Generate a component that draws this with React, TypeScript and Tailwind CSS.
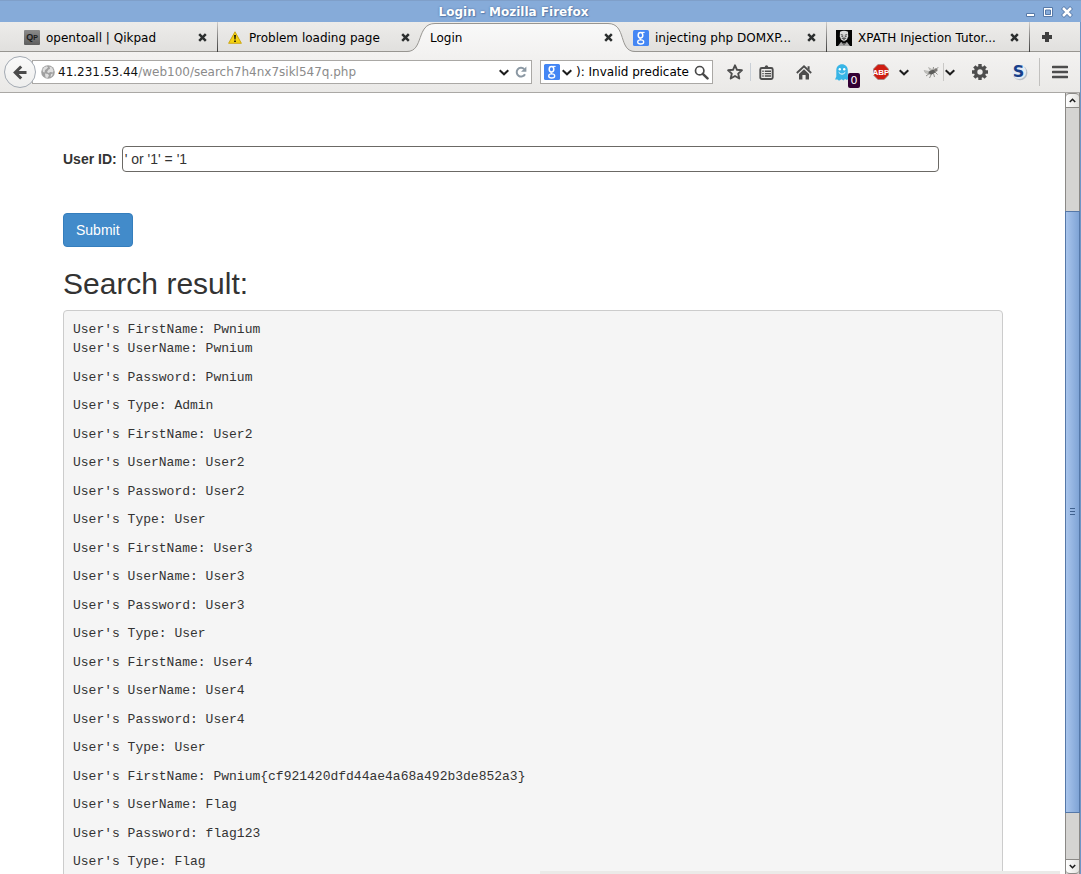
import React from "react";

type IconProps = { className?: string };

function CloseMark() {
  return (
    <svg viewBox="0 0 9 9" className="h-[9px] w-[9px]" aria-hidden="true">
      <path d="M1.200 1.200 7.800 7.800M7.800 1.200 1.200 7.800" stroke="#2b2e2e" strokeWidth="2.500" />
    </svg>
  );
}

function Chevron({ className = "" }: IconProps) {
  return (
    <svg viewBox="0 0 10 7" className={`h-[7px] w-[10px] shrink-0 ${className}`} aria-hidden="true">
      <path d="M.7 1.200 5 5.300 9.300 1.200" fill="none" stroke="#1d1d1d" strokeWidth="2" />
    </svg>
  );
}

function QikpadIcon() {
  return (
    <span className="flex h-[15px] w-4 items-center justify-center rounded-[1px] bg-linear-to-b from-[#8b8b8b] to-[#5e5e5e] font-['Liberation_Sans',sans-serif] text-[9px] leading-none font-bold text-[#1c1c1c]">
      Q<span className="text-[7px]">P</span>
    </span>
  );
}

function WarningIcon() {
  return (
    <svg viewBox="0 0 14 13" className="h-[13px] w-[14px]" aria-hidden="true">
      <path d="M7 .8 13.4 12.3H.6Z" fill="#f5d312" stroke="#c9a20a" strokeWidth=".9" strokeLinejoin="round" />
      <path d="M6 4h2l-.4 4.600h-1.200ZM6.100 9.500h1.800v1.600H6.100Z" fill="#2a2300" />
    </svg>
  );
}

function GoogleIcon() {
  return (
    <svg viewBox="0 0 16 16" className="h-4 w-4 shrink-0" aria-hidden="true">
      <rect width="16" height="16" rx="1.500" fill="#4486f4" />
      <g fill="none" stroke="#fff">
        <ellipse cx="7.500" cy="5.300" rx="2.300" ry="2.700" strokeWidth="1.500" />
        <path d="M8.500 2.400H11.600" strokeWidth="1.100" />
        <path d="M7.200 8.200Q6.600 9 8 9.600" strokeWidth="1.200" />
        <ellipse cx="7.700" cy="11.900" rx="3" ry="2.100" strokeWidth="1.300" />
      </g>
    </svg>
  );
}

function MaskIcon() {
  return (
    <svg viewBox="0 0 16 16" className="h-4 w-4" aria-hidden="true">
      <path d="M0 0h16v16H0z" fill="#050505" />
      <path d="M4 1.800Q8-.4 12 1.800L12.200 6.200 11 9.600 8 11.400 5 9.600 3.800 6.200Z" fill="#d9d9d9" />
      <path d="M4.800 4.600 7.200 5.200M11.200 4.600 8.800 5.200M5.400 6.400h1.800M8.800 6.400h1.800M5.800 8.400 8 7.900l2.200.5M7 9.800h2" stroke="#171717" strokeWidth=".7" />
      <path d="M2 16 5 12l3 1.400L11 12l3 4Z" fill="#a9a9a9" />
      <path d="M6 12.600 8 16l2-3.400Z" fill="#0a0a0a" />
      <path d="M8 13v3" stroke="#ddd" strokeWidth=".8" />
    </svg>
  );
}

function BackIcon() {
  return (
    <svg viewBox="0 0 14 15" className="h-[15px] w-[14px]" aria-hidden="true">
      <path d="M13.5 7.5H3M8.2 1.5 2.2 7.5l6 6" fill="none" stroke="#4b4b4b" strokeWidth="3" />
    </svg>
  );
}

function GlobeIcon() {
  return (
    <svg viewBox="0 0 14 14" className="h-[14px] w-[14px] shrink-0" aria-hidden="true">
      <circle cx="7" cy="7" r="6.8" fill="#a0a0a0" />
      <path d="M1.500 4.500 3.500 2 6 1.200l1 1.300L5.500 4 4 5l-.5 2.500L2 7ZM8.500 1.500l2.500 1 1.500 3-.5 2-2.500-.5L7.500 8 6 7l1.500-2.500L9 4ZM4 8.500l3 .5 1 1.500L6.500 13 4.500 12.500ZM10 9l2-.5-1 2.500-1.500 1Z" fill="#dedede" />
    </svg>
  );
}

function ReloadIcon() {
  return (
    <svg viewBox="0 0 12 12" className="h-3 w-3" aria-hidden="true">
      <path d="M9.200 3A4.400 4.400 0 1 0 10 8.200" fill="none" stroke="#8b98a3" strokeWidth="2" />
      <path d="M11.400.4V5.800H6Z" fill="#8b98a3" />
    </svg>
  );
}

function SearchIcon() {
  return (
    <svg viewBox="0 0 15 15" className="h-[15px] w-[15px]" aria-hidden="true">
      <circle cx="5.700" cy="5.700" r="4.200" fill="none" stroke="#4a4a4a" strokeWidth="1.700" />
      <path d="m8.800 8.800 4.700 4.600" stroke="#4a4a4a" strokeWidth="2.500" strokeLinecap="round" />
    </svg>
  );
}

function StarIcon() {
  return (
    <svg viewBox="0 0 16 16" className="h-4 w-4" aria-hidden="true">
      <path d="m8 1.300 2 4.500 4.900.5-3.700 3.300 1.100 4.900L8 12l-4.300 2.500 1.100-4.900L1.100 6.300l4.900-.5Z" fill="none" stroke="#4d4d4d" strokeWidth="1.900" strokeLinejoin="round" />
    </svg>
  );
}

function ClipboardIcon() {
  return (
    <svg viewBox="0 0 15 15" className="h-[15px] w-[15px]" aria-hidden="true">
      <rect x="1.300" y="3" width="12.400" height="11" rx="1.500" fill="none" stroke="#4d4d4d" strokeWidth="1.900" />
      <path d="M4 4V2h1.700Q6 .2 7.500.2T9.300 2H11v2Z" fill="#4d4d4d" />
      <path d="M3.300 6.300h1.400M3.300 8.600h1.400M3.300 11h1.400M5.800 6.300H12M5.800 8.600H12M5.800 11H12" stroke="#4d4d4d" strokeWidth="1.400" />
    </svg>
  );
}

function HomeIcon() {
  return (
    <svg viewBox="0 0 16 15" className="h-[15px] w-4" aria-hidden="true">
      <path d="M.8 8 8 1.300 15.200 8" fill="none" stroke="#4d4d4d" strokeWidth="1.800" />
      <path d="M11.600 1.200h2v4l-2-1.800ZM3 9l5-4.800L13 9v5.500H9.600V10H6.400v4.500H3Z" fill="#4d4d4d" />
    </svg>
  );
}

function GhostIcon() {
  return (
    <svg viewBox="0 0 14 17" className="h-[17px] w-[14px]" aria-hidden="true">
      <path d="M1.300 6.500C1.300 2.600 3.800.3 7 .3s5.800 2.300 5.800 6.200v5.700l1.200 2.600-2.200 1.200-1.800-1.100L8.500 16.500 6.500 15.200 4 16.700 2.500 15.600 0 15.500 1.300 12.500Z" fill="#38b5e6" />
      <circle cx="4.800" cy="5.200" r="1.200" fill="#fff" />
      <circle cx="9.200" cy="5.200" r="1.200" fill="#fff" />
      <path d="M3.700 8.300Q7 12 10.300 8.300" fill="none" stroke="#fff" strokeWidth="1" />
    </svg>
  );
}

function AdblockIcon() {
  return (
    <svg viewBox="0 0 16 16" className="h-4 w-4" aria-hidden="true">
      <path d="M4.900.5h6.200l4.400 4.400v6.200l-4.400 4.400H4.900L.5 11.100V4.900Z" fill="#cf1d12" stroke="#9c8783" strokeWidth=".8" />
      <text x="8" y="10.800" textAnchor="middle" fontFamily="Liberation Sans Narrow, Liberation Sans, sans-serif" fontWeight="bold" fontSize="8" fill="#fff">ABP</text>
    </svg>
  );
}

function FlyIcon() {
  return (
    <svg viewBox="0 0 16 13" className="h-[13px] w-4" aria-hidden="true">
      <path d="M1 4.500 7 5.500 6 8 2.500 7ZM5.500 1.500 10 4 8 6Z" fill="#c4c4c0" stroke="#9e9e9a" strokeWidth=".5" />
      <ellipse cx="9" cy="6.200" rx="3.600" ry="2" transform="rotate(-22 9 6.200)" fill="#5c5c5a" />
      <circle cx="12.800" cy="4" r="1.800" fill="#7b7875" />
      <path d="M7 7 3 10M8.500 8 6.500 12M10.500 7.500 11.500 11M12 6l2.500 2.500M10 4 10.500 1M13.500 3l1.700-1.800" fill="none" stroke="#777774" strokeWidth=".8" />
    </svg>
  );
}

function GearIcon() {
  return (
    <svg viewBox="0 0 16 16" className="h-4 w-4" aria-hidden="true">
      <path d="M8 0v16M0 8h16M2.350 2.350l11.300 11.300M13.650 2.350 2.350 13.650" stroke="#4d4d4d" strokeWidth="3.400" />
      <circle cx="8" cy="8" r="4.400" fill="none" stroke="#4d4d4d" strokeWidth="3.400" />
      <circle cx="8" cy="8" r="2.700" fill="#efeeed" />
    </svg>
  );
}

function StylishIcon() {
  return (
    <svg viewBox="0 0 18 18" className="h-[18px] w-[18px]" aria-hidden="true">
      <circle cx="10" cy="9.800" r="7.400" fill="#b9bfc6" />
      <circle cx="9" cy="8.800" r="7.200" fill="#e4ecf5" />
      <text x="8.500" y="14.300" textAnchor="middle" fontFamily="DejaVu Sans, sans-serif" fontWeight="bold" fontSize="16" fill="#173f8a">S</text>
    </svg>
  );
}

type TabInfo = { title: string; icon?: React.ReactNode; active?: boolean; divider?: boolean };

const tabs: TabInfo[] = [
  { title: "opentoall | Qikpad", icon: <QikpadIcon />, divider: true },
  { title: "Problem loading page", icon: <WarningIcon /> },
  { title: "Login", active: true },
  { title: "injecting php DOMXP...", icon: <GoogleIcon />, divider: true },
  { title: "XPATH Injection Tutor...", icon: <MaskIcon />, divider: true },
];

function Tab({ title, icon, active, divider }: TabInfo) {
  return (
    <div className={`relative flex h-[30px] w-[203px] items-center pt-px pr-[11px] pl-[9px] ${active ? "z-10" : ""}`}>
      {active && (
        <svg viewBox="0 0 228 31" className="absolute top-0 -left-[14px] h-[31px] w-[228px]" aria-hidden="true">
          <defs>
            <linearGradient id="activeTab" x1="0" y1="0" x2="0" y2="1">
              <stop offset="0" stopColor="#f9f9f9" />
              <stop offset="1" stopColor="#f3f2f1" />
            </linearGradient>
          </defs>
          <path d="M0 29.500C17 29.500 9 1.500 28 1.500H201C220 1.500 211 29.500 228 29.500V31H0Z" fill="url(#activeTab)" />
          <path d="M0 29.500C17 29.500 9 1.500 28 1.500H201C220 1.500 211 29.500 228 29.500" fill="none" stroke="#979591" />
        </svg>
      )}
      <button type="button" className="relative flex min-w-0 flex-1 items-center gap-[6px] text-left">
        {icon && <span className="flex w-4 shrink-0 justify-center">{icon}</span>}
        <span className="truncate">{title}</span>
      </button>
      <button type="button" aria-label={`Close ${title}`} className="relative shrink-0">
        <CloseMark />
      </button>
      {divider && <span className="absolute top-0 right-0 h-[30px] w-px bg-linear-to-b from-[#d0cecc] to-[#3c3c3c]" />}
    </div>
  );
}

const results = [
  "User's UserName: Pwnium",
  "User's Password: Pwnium",
  "User's Type: Admin",
  "User's FirstName: User2",
  "User's UserName: User2",
  "User's Password: User2",
  "User's Type: User",
  "User's FirstName: User3",
  "User's UserName: User3",
  "User's Password: User3",
  "User's Type: User",
  "User's FirstName: User4",
  "User's UserName: User4",
  "User's Password: User4",
  "User's Type: User",
  "User's FirstName: Pwnium{cf921420dfd44ae4a68a492b3de852a3}",
  "User's UserName: Flag",
  "User's Password: flag123",
  "User's Type: Flag",
];

function TitleBar() {
  return (
    <header className="relative flex h-[22px] shrink-0 items-center justify-center border-t border-[#7f9fc9] bg-[#86abd9] pr-[68px] pl-[14px]">
      <h1 className="pl-0 text-[12px] leading-4 font-bold text-white [text-shadow:0_0_2px_#496b9b,1px_1px_1px_#5f82b3]">Login - Mozilla Firefox</h1>
      <div className="absolute top-[5px] right-[8px] flex h-3 items-center gap-[8px]">
        <button type="button" aria-label="Minimize">
          <svg viewBox="0 0 9 12" className="h-3 w-[9px]"><path d="M.5 7.500h8v3h-8Z" fill="#fff" stroke="#5679a8" /></svg>
        </button>
        <button type="button" aria-label="Maximize">
          <svg viewBox="0 0 10 10" className="h-[10px] w-[10px]"><path d="M.5.5h9v9h-9Z" fill="#fff" stroke="#5679a8" /><path d="M2.500 3h5v4.500h-5Z" fill="#86abd9" stroke="#5679a8" /></svg>
        </button>
        <button type="button" aria-label="Close window">
          <svg viewBox="0 0 12 12" className="h-3 w-3"><path d="m1.500 1.500 9 9M10.500 1.500l-9 9" stroke="#5679a8" strokeWidth="4.200" /><path d="m2 2 8 8M10 2l-8 8" stroke="#fff" strokeWidth="2.500" /></svg>
        </button>
      </div>
    </header>
  );
}

function Toolbar() {
  return (
    <div className="flex h-[41px] shrink-0 items-center border-b border-[#aaa8a5] bg-linear-to-b from-[#f3f2f1] to-[#eae9e7] pr-3 pl-1">
      <button type="button" aria-label="Back" className="z-10 flex h-8 w-8 shrink-0 items-center justify-center rounded-full border border-[#a3aab3] bg-linear-to-b from-[#fafafa] to-[#eeeeed]">
        <BackIcon />
      </button>
      <form className="-ml-1 flex h-6 min-w-0 flex-1 items-center border border-[#aaa8a5] bg-white pr-1 pl-2" onSubmit={(e) => e.preventDefault()}>
        <GlobeIcon />
        <a href="#address" className="ml-[3px] min-w-0 flex-1 truncate text-[#8b8b8b]">
          <span className="text-[#111]">41.231.53.44</span>/web100/search7h4nx7sikl547q.php
        </a>
        <button type="button" aria-label="History"><Chevron /></button>
        <button type="button" aria-label="Reload" className="ml-[6px]"><ReloadIcon /></button>
      </form>
      <form className="ml-2 flex h-6 w-[173px] shrink-0 items-center border border-[#aaa8a5] bg-white px-[3px]" onSubmit={(e) => e.preventDefault()}>
        <button type="button" aria-label="Search engine" className="flex items-center gap-[2px]"><GoogleIcon /><Chevron /></button>
        <input aria-label="Search" defaultValue="): Invalid predicate" className="ml-1 w-0 min-w-0 flex-1 bg-transparent text-black outline-none" />
        <button type="button" aria-label="Go"><SearchIcon /></button>
      </form>
      <div className="flex shrink-0 items-center">
        <button type="button" aria-label="Bookmark" className="ml-[14px]"><StarIcon /></button>
        <span className="ml-[7px] h-[18px] w-px bg-[#c9cfd6]" />
        <button type="button" aria-label="Bookmarks list" className="ml-2"><ClipboardIcon /></button>
        <button type="button" aria-label="Home" className="ml-[22px]"><HomeIcon /></button>
        <button type="button" aria-label="Trackers" className="relative ml-[23px]">
          <GhostIcon />
          <span className="absolute top-[9px] left-[13px] flex h-[15px] w-3 items-center justify-center rounded-[2px] bg-[#330033] text-[11px] leading-none text-white">0</span>
        </button>
        <button type="button" aria-label="Ad blocking" className="ml-[24px]"><AdblockIcon /></button>
        <button type="button" aria-label="Ad blocking options" className="ml-[10px]"><Chevron /></button>
        <button type="button" aria-label="Debug" className="ml-[14px]"><FlyIcon /></button>
        <span className="ml-[4px] h-[18px] w-px bg-[#c9c8c6]" />
        <button type="button" aria-label="Debug options" className="ml-[1px]"><Chevron /></button>
        <button type="button" aria-label="Settings" className="ml-[17px]"><GearIcon /></button>
        <button type="button" aria-label="Styles" className="ml-[22px]"><StylishIcon /></button>
        <span className="ml-[11px] h-7 w-px bg-[#c1c0be]" />
        <button type="button" aria-label="Menu" className="ml-3">
          <svg viewBox="0 0 16 14" className="h-[14px] w-4"><path d="M1 2h14M1 7h14M1 12h14" stroke="#4d4d4d" strokeWidth="2.600" strokeLinecap="round" /></svg>
        </button>
      </div>
    </div>
  );
}

function Scrollbar() {
  return (
    <aside className="flex w-[15px] shrink-0 flex-col border-x border-[#8b8986] bg-[#d5d4d2]">
      <button type="button" aria-label="Scroll up" className="flex h-[15px] shrink-0 items-center justify-center rounded-t-[4px] border-y border-[#8b8986] bg-linear-to-r from-white to-[#e3e2df]">
        <svg viewBox="0 0 7 5" className="h-[5px] w-[7px]"><path d="m.8 4 2.700-2.700L6.200 4" fill="none" stroke="#1c1c1c" strokeWidth="1.600" /></svg>
      </button>
      <div className="grow-[104]" />
      <div className="-mx-px flex grow-[600] flex-col items-center justify-center gap-[2px] border border-[#5578a8] bg-linear-to-r from-[#a9c5ec] to-[#7fa4d6]">
        <span className="h-px w-[5px] bg-[#3f618f]" />
        <span className="h-px w-[5px] bg-[#3f618f]" />
        <span className="h-px w-[5px] bg-[#3f618f]" />
      </div>
      <div className="grow-[47]" />
      <button type="button" aria-label="Scroll down" className="flex h-[15px] shrink-0 items-center justify-center rounded-b-[4px] border-y border-[#8b8986] bg-linear-to-r from-white to-[#e3e2df]">
        <svg viewBox="0 0 7 5" className="h-[5px] w-[7px]"><path d="m.8 1 2.700 2.700L6.200 1" fill="none" stroke="#1c1c1c" strokeWidth="1.600" /></svg>
      </button>
    </aside>
  );
}

export default function App() {
  return (
    <div className="flex h-screen flex-col overflow-hidden bg-[#86abd9] font-['DejaVu_Sans',sans-serif] text-[12px] leading-4 text-black">
      <TitleBar />
      <div className="flex min-h-0 flex-1 flex-col border-r border-[#6f95c6]">
        <nav className="flex h-[30px] shrink-0 border-b border-[#979591] bg-linear-to-b from-[#edecea] to-[#e1e0de] pl-[15px]">
          {tabs.map((tab) => (
            <Tab key={tab.title} {...tab} />
          ))}
          <button type="button" aria-label="New tab" className="ml-3 flex items-center pt-px">
            <svg viewBox="0 0 10 10" className="h-[10px] w-[10px]"><path d="M5 0v10M0 5h10" stroke="#3f3f3f" strokeWidth="4" /></svg>
          </button>
        </nav>
        <Toolbar />
        <div className="relative flex min-h-0 flex-1 bg-white">
          <main className="min-w-0 flex-1 overflow-hidden pt-[53px] pr-[62px] pl-[63px] font-['Liberation_Sans',sans-serif] text-[14px] leading-5 text-[#333]">
            <form onSubmit={(e) => e.preventDefault()}>
              <div className="flex items-center gap-[5px] pr-16">
                <label htmlFor="user-id" className="shrink-0 font-bold">User ID:</label>
                <input id="user-id" type="text" defaultValue="' or '1' = '1" className="h-[26px] min-w-0 flex-1 rounded-[4px] border border-[#6b6965] bg-white px-[2px] outline-none" />
              </div>
              <button type="submit" className="mt-[41px] block h-[34px] rounded-[4px] border border-[#357ebd] bg-[#428bca] px-3 text-white">Submit</button>
            </form>
            <h2 className="mt-5 text-[30px] leading-[33px]">Search result:</h2>
            <div className="mt-[10px] rounded-[4px] border border-[#ccc] bg-[#f5f5f5] px-[9px] pt-[9px] pb-5 font-['Liberation_Mono',monospace] text-[13px] leading-[19px]">
              <p>User's FirstName: Pwnium</p>
              {results.map((line, i) => (
                <p key={i} className="not-nth-2:odd:mt-[10px] not-nth-2:even:mt-[9px]">{line}</p>
              ))}
            </div>
          </main>
          <Scrollbar />
          <div className="absolute right-5 bottom-0 left-1/2 h-[3px] bg-[#ebeae8]" />
        </div>
      </div>
    </div>
  );
}
